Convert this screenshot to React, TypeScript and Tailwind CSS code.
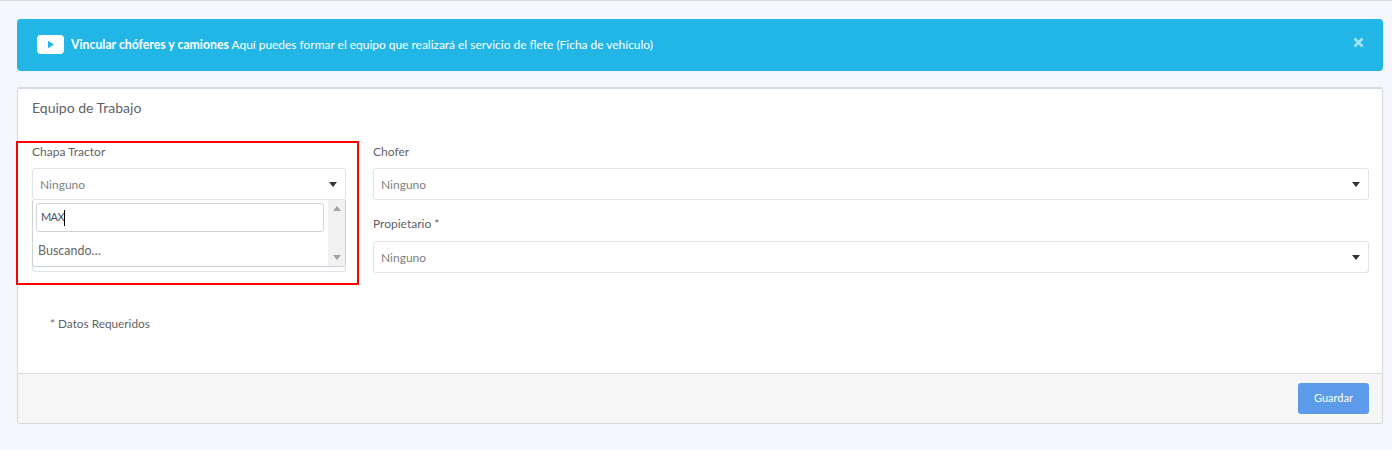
function Caret() {
  return <span className="w-0 h-0 border-x-[4px] border-x-transparent border-t-[5px] border-t-[#333]" />;
}

function SelectBox({ label, value, tight }: { label: string; value: string; tight?: boolean }) {
  return (
    <div className="flex flex-col">
      <label className="h-[19px] text-[12px] leading-[17px] text-[#5f6368]">{label}</label>
      <div className={`${tight ? 'mt-[6px]' : 'mt-[7px]'} flex h-[32px] items-center justify-between rounded-[3px] border border-[#dde3e8] bg-white pl-[7px] pr-[8px] text-[12px] text-[#808080]`}>
        <span className="pt-[1px]">{value}</span>
        <Caret />
      </div>
    </div>
  );
}

function OpenDropdown() {
  return (
    <div className="absolute left-0 right-0 top-[57px] z-10 flex h-[67px] rounded-b-[3px] border border-t-0 border-[#cdd3d8] bg-white">
      <div className="flex-1 pl-[3px] pr-[4px] pt-[3px]">
        <div className="flex h-[29px] items-center rounded-[3px] border border-[#cfd4d9] pl-[4px] text-[11px] tracking-[-0.6px] text-[#44506b]">
          MAX
          <span className="h-[16px] w-px bg-black" />
        </div>
        <div className="mt-[9px] pl-[2px] text-[12.5px] leading-[19px] text-[#666]">Buscando…</div>
      </div>
      <div className="flex w-[17px] flex-col items-center justify-between bg-[#f1f1f1] py-[6px]">
        <span className="h-0 w-0 border-x-[4px] border-b-[5px] border-x-transparent border-b-[#a3a3a3]" />
        <span className="h-0 w-0 border-x-[4px] border-t-[5px] border-x-transparent border-t-[#a3a3a3]" />
      </div>
    </div>
  );
}

export default function App() {
  return (
    <div className="relative h-[450px] overflow-hidden border-t border-[#d3dde7] bg-[#f4f6fb] pl-[17px] pr-[9px] pt-[18px] font-['Lato','Noto_Sans',sans-serif]">
      <div className="flex h-[52px] items-center justify-between rounded-[4px] bg-[#22b6e6] pl-[20px] pr-[19px] text-[11.95px] text-white">
        <div className="flex items-center gap-[7px]">
          <svg className="mb-[1px]" width="27" height="19" viewBox="0 0 27 19" aria-hidden="true">
            <rect width="27" height="19" rx="4" fill="#fff" />
            <path d="M11 5.8 L17 9.5 L11 13.2 Z" fill="#22b6e6" />
          </svg>
          <p className="pt-[1px]">
            <strong className="text-[12.25px] font-bold">Vincular chóferes y camiones</strong> Aquí puedes formar el equipo que realizará el servicio de flete (Ficha de vehículo)
          </p>
        </div>
        <svg className="mb-[6px]" width="11" height="11" viewBox="0 0 11 11" aria-hidden="true">
          <path d="M1.5 1.5 L9.5 9.5 M9.5 1.5 L1.5 9.5" stroke="#a5e1f5" strokeWidth="2.6" />
        </svg>
      </div>

      <div className="mt-[16px] h-[337px] rounded-[3px] border border-[#d5dadf] border-t-2 border-t-[#d2dde5] bg-white">
        <div className="flex h-[284px] flex-col pl-[14px] pr-[13px]">
          <h2 className="pt-[9px] text-[14px] leading-[20px] text-[#5f6368]">Equipo de Trabajo</h2>
          <div className="mt-[25px] grid grid-cols-[314px_1fr] gap-x-[27px]">
            <div className="relative">
              <SelectBox label="Chapa Tractor" value="Ninguno" tight />
              <div className="absolute left-0 right-0 top-[99px] h-[30px] rounded-b-[3px] border border-t-0 border-[#dde3e8]" />
              <OpenDropdown />
            </div>
            <div className="flex flex-col gap-[15px]">
              <SelectBox label="Chofer" value="Ninguno" tight />
              <SelectBox label="Propietario *" value="Ninguno" />
            </div>
          </div>
          <p className="mt-[42px] pl-[18px] text-[11.8px] leading-[18px] text-[#5f6368]">* Datos Requeridos</p>
        </div>
        <div className="flex h-[50px] items-center justify-end rounded-b-[3px] border-t border-[#d9dcdf] bg-[#f6f6f6] pr-[13px]">
          <button className="h-[31px] w-[71px] rounded-[3px] bg-[#5b9bea] text-[11px] text-white">Guardar</button>
        </div>
      </div>

      <div className="pointer-events-none absolute left-[16px] top-[140px] h-[144px] w-[343px] border-2 border-[#ff0000]" />
    </div>
  );
}
